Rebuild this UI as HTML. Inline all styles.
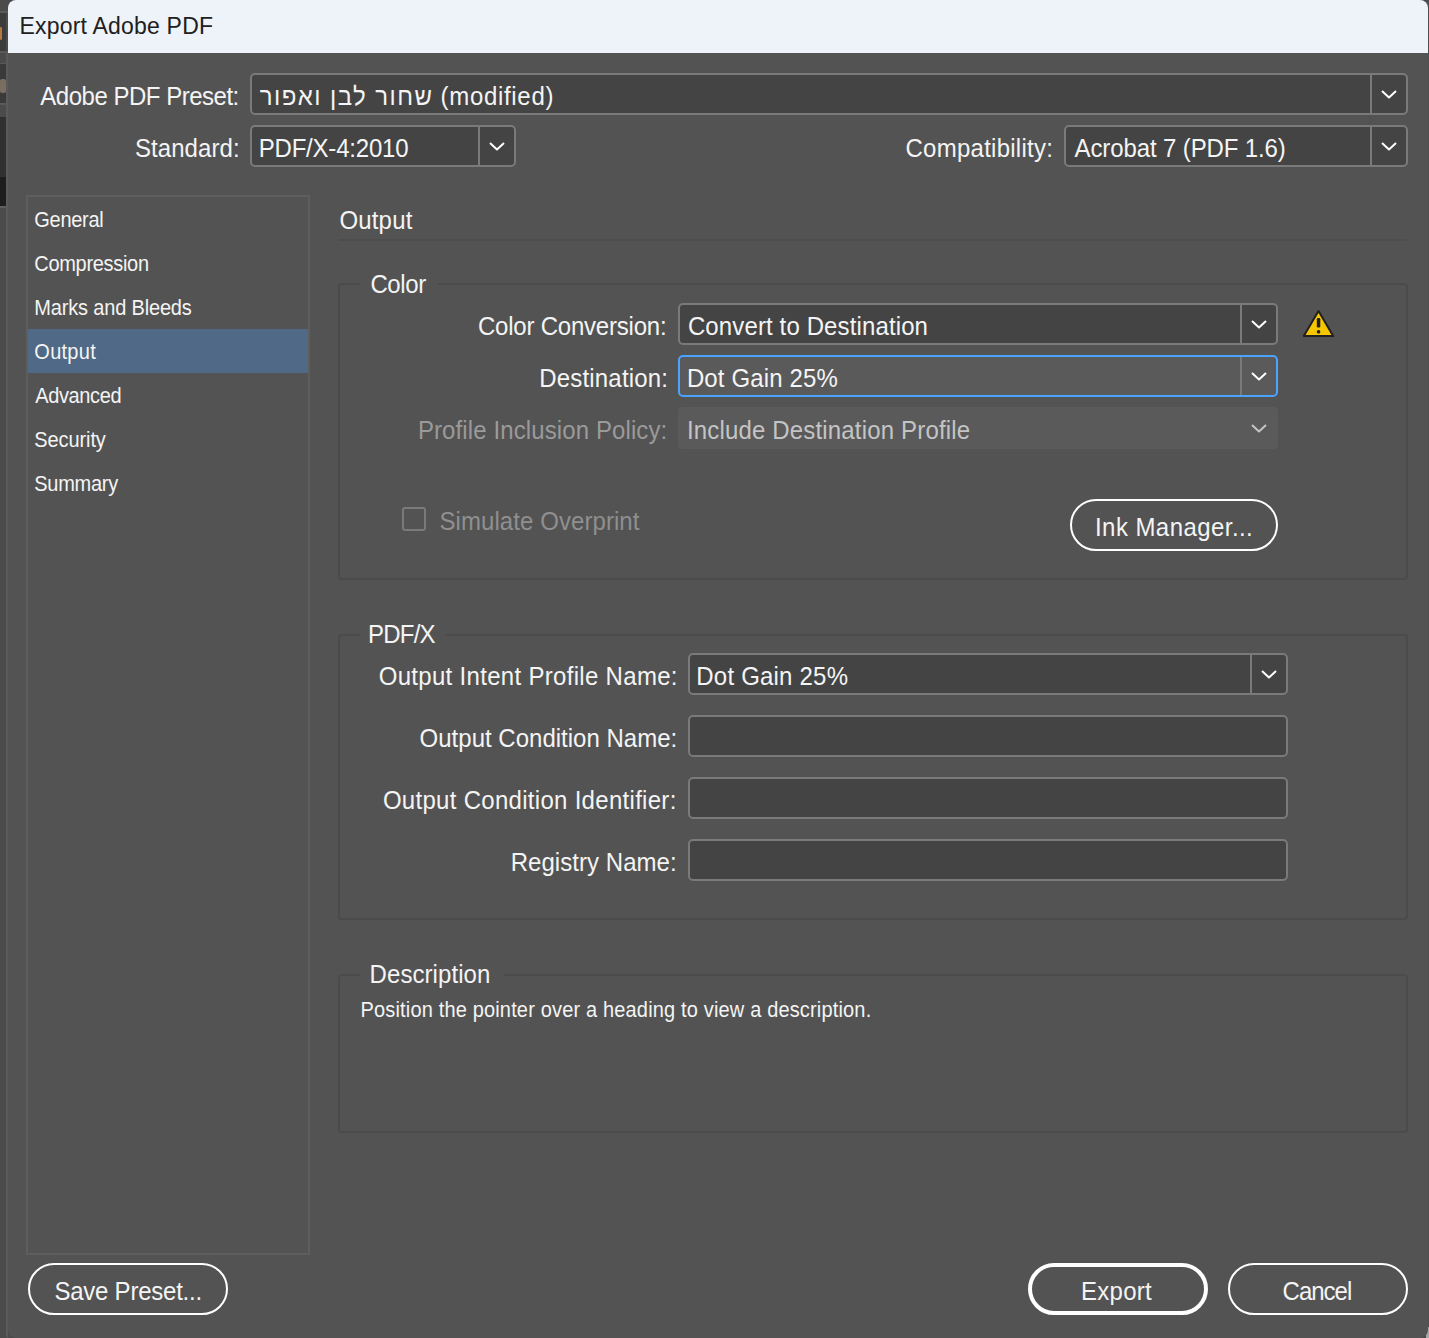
<!DOCTYPE html>
<html><head><meta charset="utf-8"><title>Export Adobe PDF</title><style>
html,body{margin:0;padding:0;width:1429px;height:1338px;overflow:hidden;background:#4a4a4a}
.b{position:absolute;box-sizing:border-box}
.t{position:absolute;font-family:"Liberation Sans",sans-serif;line-height:1;white-space:pre}
</style></head><body>
<div class="b" style="left:0px;top:0px;width:8px;height:1338px;background:#4b4b4b"></div>
<div class="b" style="left:0px;top:11px;width:8px;height:2px;background:#5a5a5a"></div>
<div class="b" style="left:0px;top:13px;width:6px;height:38px;background:#3c3c3c"></div>
<div class="b" style="left:0px;top:51px;width:8px;height:2px;background:#5a5a5a"></div>
<div class="b" style="left:0px;top:63px;width:8px;height:1px;background:#5a5a5a"></div>
<div class="b" style="left:0px;top:64px;width:6px;height:39px;background:#3a3a3a"></div>
<div class="b" style="left:0px;top:103px;width:8px;height:2px;background:#5a5a5a"></div>
<div class="b" style="left:0px;top:117px;width:6px;height:60px;background:#303030"></div>
<div class="b" style="left:0px;top:177px;width:6px;height:30px;background:#1e1e1e"></div>
<div class="b" style="left:0px;top:206px;width:8px;height:2px;background:#5e5e5e"></div>
<div class="b" style="left:0px;top:27px;width:2px;height:13px;background:#d08a40;border-radius:1px;opacity:.8"></div>
<div class="b" style="left:0px;top:79px;width:6px;height:14px;background:#c8b090;border-radius:2px;opacity:.45"></div>
<div class="b" style="left:6px;top:53px;width:2px;height:1285px;background:#5a5a5a;border-radius:0 0 0 8px"></div>
<div class="b" style="left:1427px;top:0px;width:2px;height:1338px;background:#4f4f4f"></div>
<div class="b" style="left:1426px;top:1327px;width:3px;height:11px;background:#a8a8a8;border-radius:3px 0 0 0"></div>
<div class="b" style="left:8px;top:0px;width:1420px;height:1338px;background:#535353;border-radius:8px 8px 8px 8px"></div>
<div class="b" style="left:8px;top:0px;width:1420px;height:53px;background:#eef2f9;border-radius:8px 8px 0 0"></div>
<div class="t" style="left:19.5px;top:14.5px;font-size:23px;letter-spacing:0.2px;color:#202020;transform-origin:0 19.0px;transform:scaleY(1.07);">Export Adobe PDF</div>
<div class="t" style="left:40.3px;top:85.0px;font-size:24px;letter-spacing:-0.488px;color:#f4f4f4;transform-origin:0 20.0px;transform:scaleY(1.07);">Adobe PDF Preset:</div>
<div class="b" style="left:250px;top:73px;width:1158px;height:42px;background:#444444;border:2px solid #7a7a7a;border-radius:5px"></div>
<div class="b" style="left:1370px;top:75px;width:2px;height:38px;background:#7a7a7a"></div>
<svg class="b" style="left:1380.0px;top:88.75px" width="18" height="10.5" viewBox="0 0 18 10.5"><polyline points="2,2 9.0,8.5 16,2" fill="none" stroke="#ffffff" stroke-width="2" stroke-linecap="butt" stroke-linejoin="round"/></svg>
<div class="t" style="left:259.7px;top:85.0px;font-size:24px;letter-spacing:1.446px;color:#f4f4f4;transform-origin:0 20.0px;transform:scaleY(1.07);">שחור לבן ואפור</div>
<div class="t" style="left:440.6px;top:85.0px;font-size:24px;letter-spacing:0.678px;color:#f4f4f4;transform-origin:0 20.0px;transform:scaleY(1.07);">(modified)</div>
<div class="t" style="left:135px;top:136.5px;font-size:24px;letter-spacing:0.062px;color:#f4f4f4;transform-origin:0 20.0px;transform:scaleY(1.07);">Standard:</div>
<div class="b" style="left:250px;top:125px;width:266px;height:42px;background:#444444;border:2px solid #7a7a7a;border-radius:5px"></div>
<div class="b" style="left:478px;top:127px;width:2px;height:38px;background:#7a7a7a"></div>
<svg class="b" style="left:488.0px;top:140.75px" width="18" height="10.5" viewBox="0 0 18 10.5"><polyline points="2,2 9.0,8.5 16,2" fill="none" stroke="#ffffff" stroke-width="2" stroke-linecap="butt" stroke-linejoin="round"/></svg>
<div class="t" style="left:258.7px;top:136.5px;font-size:24px;letter-spacing:-0.2px;color:#f4f4f4;transform-origin:0 20.0px;transform:scaleY(1.07);">PDF/X-4:2010</div>
<div class="t" style="left:905.5px;top:136.5px;font-size:24px;letter-spacing:0.254px;color:#f4f4f4;transform-origin:0 20.0px;transform:scaleY(1.07);">Compatibility:</div>
<div class="b" style="left:1064px;top:125px;width:344px;height:42px;background:#444444;border:2px solid #7a7a7a;border-radius:5px"></div>
<div class="b" style="left:1370px;top:127px;width:2px;height:38px;background:#7a7a7a"></div>
<svg class="b" style="left:1380.0px;top:140.75px" width="18" height="10.5" viewBox="0 0 18 10.5"><polyline points="2,2 9.0,8.5 16,2" fill="none" stroke="#ffffff" stroke-width="2" stroke-linecap="butt" stroke-linejoin="round"/></svg>
<div class="t" style="left:1074.6px;top:136.5px;font-size:24px;letter-spacing:-0.122px;color:#f4f4f4;transform-origin:0 20.0px;transform:scaleY(1.07);">Acrobat 7 (PDF 1.6)</div>
<div class="b" style="left:26px;top:195px;width:284px;height:1060px;border:2px solid #5e5e5e"></div>
<div class="b" style="left:28px;top:329px;width:280px;height:44px;background:#4f6986"></div>
<div class="t" style="left:34.3px;top:209.5px;font-size:20px;letter-spacing:-0.283px;color:#f4f4f4;transform-origin:0 17.0px;transform:scaleY(1.07);">General</div>
<div class="t" style="left:34.3px;top:253.5px;font-size:20px;letter-spacing:-0.31px;color:#f4f4f4;transform-origin:0 17.0px;transform:scaleY(1.07);">Compression</div>
<div class="t" style="left:34.3px;top:297.5px;font-size:20px;letter-spacing:-0.173px;color:#f4f4f4;transform-origin:0 17.0px;transform:scaleY(1.07);">Marks and Bleeds</div>
<div class="t" style="left:34.3px;top:341.5px;font-size:20px;letter-spacing:0.28px;color:#f4f4f4;transform-origin:0 17.0px;transform:scaleY(1.07);">Output</div>
<div class="t" style="left:35.3px;top:385.5px;font-size:20px;letter-spacing:-0.386px;color:#f4f4f4;transform-origin:0 17.0px;transform:scaleY(1.07);">Advanced</div>
<div class="t" style="left:34.3px;top:429.5px;font-size:20px;letter-spacing:-0.1px;color:#f4f4f4;transform-origin:0 17.0px;transform:scaleY(1.07);">Security</div>
<div class="t" style="left:34.3px;top:473.5px;font-size:20px;letter-spacing:-0.283px;color:#f4f4f4;transform-origin:0 17.0px;transform:scaleY(1.07);">Summary</div>
<div class="t" style="left:339.4px;top:208.5px;font-size:24px;letter-spacing:0.18px;color:#f4f4f4;transform-origin:0 20.0px;transform:scaleY(1.07);">Output</div>
<div class="b" style="left:338px;top:239px;width:1069px;height:2px;background:#4d4d4d"></div>
<div class="b" style="left:338px;top:283px;width:1070px;height:297px;border:2px solid #4b4b4b;border-radius:4px"></div>
<div class="b" style="left:360px;top:281px;width:78px;height:6px;background:#535353"></div>
<div class="t" style="left:370.4px;top:272.5px;font-size:24px;letter-spacing:-0.4px;color:#f4f4f4;transform-origin:0 20.0px;transform:scaleY(1.07);">Color</div>
<div class="t" style="left:477.9px;top:315.0px;font-size:24px;letter-spacing:-0.212px;color:#f4f4f4;transform-origin:0 20.0px;transform:scaleY(1.07);">Color Conversion:</div>
<div class="b" style="left:678px;top:303px;width:600px;height:42px;background:#444444;border:2px solid #7a7a7a;border-radius:5px"></div>
<div class="b" style="left:1240px;top:305px;width:2px;height:38px;background:#7a7a7a"></div>
<svg class="b" style="left:1250.0px;top:318.75px" width="18" height="10.5" viewBox="0 0 18 10.5"><polyline points="2,2 9.0,8.5 16,2" fill="none" stroke="#ffffff" stroke-width="2" stroke-linecap="butt" stroke-linejoin="round"/></svg>
<div class="t" style="left:687.9px;top:315.1px;font-size:24px;letter-spacing:0.124px;color:#f4f4f4;transform-origin:0 20.0px;transform:scaleY(1.07);">Convert to Destination</div>
<div class="t" style="left:539.2px;top:367.0px;font-size:24px;letter-spacing:0.191px;color:#f4f4f4;transform-origin:0 20.0px;transform:scaleY(1.07);">Destination:</div>
<div class="b" style="left:678px;top:355px;width:600px;height:42px;background:#5a5a5a;border:2px solid #4ba3ff;border-radius:5px"></div>
<div class="b" style="left:1240px;top:357px;width:2px;height:38px;background:#7a7a7a"></div>
<svg class="b" style="left:1250.0px;top:370.75px" width="18" height="10.5" viewBox="0 0 18 10.5"><polyline points="2,2 9.0,8.5 16,2" fill="none" stroke="#ffffff" stroke-width="2" stroke-linecap="butt" stroke-linejoin="round"/></svg>
<div class="t" style="left:686.9px;top:366.5px;font-size:24px;letter-spacing:0.145px;color:#f4f4f4;transform-origin:0 20.0px;transform:scaleY(1.07);">Dot Gain 25%</div>
<div class="t" style="left:417.9px;top:419.0px;font-size:24px;letter-spacing:0.108px;color:#9a9a9a;transform-origin:0 20.0px;transform:scaleY(1.07);">Profile Inclusion Policy:</div>
<div class="b" style="left:678px;top:407px;width:600px;height:42px;background:#5a5a5a;border-radius:4px"></div>
<div class="t" style="left:686.9px;top:418.7px;font-size:24px;letter-spacing:0.169px;color:#c4c4c4;transform-origin:0 20.0px;transform:scaleY(1.07);">Include Destination Profile</div>
<svg class="b" style="left:1250.0px;top:422.75px" width="18" height="10.5" viewBox="0 0 18 10.5"><polyline points="2,2 9.0,8.5 16,2" fill="none" stroke="#c4c4c4" stroke-width="2" stroke-linecap="butt" stroke-linejoin="round"/></svg>
<svg class="b" style="left:1301px;top:308px" width="36" height="32" viewBox="0 0 36 32"><path d="M17.5 3 L32.2 28.1 L2.8 28.1 Z" fill="#f6c600" stroke="#202020" stroke-width="2" stroke-linejoin="round"/><rect x="15.8" y="10" width="3.5" height="9.4" fill="#202020" rx="1.2"/><rect x="15.8" y="22" width="3.5" height="3.5" fill="#202020" rx="1.5"/></svg>
<div class="b" style="left:402px;top:507px;width:24px;height:24px;border:2px solid #7a7a7a;border-radius:3px"></div>
<div class="t" style="left:439.5px;top:509.9px;font-size:24px;letter-spacing:0.071px;color:#8f8f8f;transform-origin:0 20.0px;transform:scaleY(1.07);">Simulate Overprint</div>
<div class="b" style="left:1070px;top:499px;width:208px;height:52px;border:2px solid #ffffff;border-radius:26px"></div>
<div class="t" style="left:1095px;top:516.4px;font-size:24px;letter-spacing:0.438px;color:#f4f4f4;transform-origin:0 20.0px;transform:scaleY(1.07);">Ink Manager...</div>
<div class="b" style="left:338px;top:634px;width:1070px;height:286px;border:2px solid #4b4b4b;border-radius:4px"></div>
<div class="b" style="left:360px;top:632px;width:86px;height:6px;background:#535353"></div>
<div class="t" style="left:368.1px;top:622.9px;font-size:24px;letter-spacing:-0.8px;color:#f4f4f4;transform-origin:0 20.0px;transform:scaleY(1.07);">PDF/X</div>
<div class="t" style="left:378.7px;top:664.8px;font-size:24px;letter-spacing:0.308px;color:#f4f4f4;transform-origin:0 20.0px;transform:scaleY(1.07);">Output Intent Profile Name:</div>
<div class="b" style="left:688px;top:653px;width:600px;height:42px;background:#444444;border:2px solid #7a7a7a;border-radius:5px"></div>
<div class="b" style="left:1250px;top:655px;width:2px;height:38px;background:#7a7a7a"></div>
<svg class="b" style="left:1260.0px;top:668.75px" width="18" height="10.5" viewBox="0 0 18 10.5"><polyline points="2,2 9.0,8.5 16,2" fill="none" stroke="#ffffff" stroke-width="2" stroke-linecap="butt" stroke-linejoin="round"/></svg>
<div class="t" style="left:696.3px;top:664.9px;font-size:24px;letter-spacing:0.209px;color:#f4f4f4;transform-origin:0 20.0px;transform:scaleY(1.07);">Dot Gain 25%</div>
<div class="t" style="left:419.6px;top:726.5px;font-size:24px;letter-spacing:0.005px;color:#f4f4f4;transform-origin:0 20.0px;transform:scaleY(1.07);">Output Condition Name:</div>
<div class="b" style="left:688px;top:715px;width:600px;height:42px;background:#444444;border:2px solid #7a7a7a;border-radius:5px"></div>
<div class="t" style="left:382.9px;top:789.0px;font-size:24px;letter-spacing:0.293px;color:#f4f4f4;transform-origin:0 20.0px;transform:scaleY(1.07);">Output Condition Identifier:</div>
<div class="b" style="left:688px;top:777px;width:600px;height:42px;background:#444444;border:2px solid #7a7a7a;border-radius:5px"></div>
<div class="t" style="left:510.7px;top:850.9px;font-size:24px;letter-spacing:0.046px;color:#f4f4f4;transform-origin:0 20.0px;transform:scaleY(1.07);">Registry Name:</div>
<div class="b" style="left:688px;top:839px;width:600px;height:42px;background:#444444;border:2px solid #7a7a7a;border-radius:5px"></div>
<div class="b" style="left:338px;top:974px;width:1070px;height:159px;border:2px solid #4b4b4b;border-radius:4px"></div>
<div class="b" style="left:360px;top:972px;width:144px;height:6px;background:#535353"></div>
<div class="t" style="left:369.6px;top:963.0px;font-size:24px;letter-spacing:0.07px;color:#f4f4f4;transform-origin:0 20.0px;transform:scaleY(1.07);">Description</div>
<div class="t" style="left:360.5px;top:999.5px;font-size:20px;letter-spacing:0.163px;color:#f4f4f4;transform-origin:0 17.0px;transform:scaleY(1.07);">Position the pointer over a heading to view a description.</div>
<div class="b" style="left:28px;top:1263px;width:200px;height:52px;border:2px solid #ffffff;border-radius:26px"></div>
<div class="t" style="left:54.4px;top:1279.8px;font-size:24px;letter-spacing:-0.231px;color:#f4f4f4;transform-origin:0 20.0px;transform:scaleY(1.07);">Save Preset...</div>
<div class="b" style="left:1028px;top:1263px;width:180px;height:52px;border:4px solid #ffffff;border-radius:26px"></div>
<div class="t" style="left:1081px;top:1280.2px;font-size:24px;letter-spacing:0.26px;color:#f4f4f4;transform-origin:0 20.0px;transform:scaleY(1.07);">Export</div>
<div class="b" style="left:1228px;top:1263px;width:180px;height:52px;border:2px solid #ffffff;border-radius:26px"></div>
<div class="t" style="left:1282.6px;top:1280.2px;font-size:24px;letter-spacing:-1.0px;color:#f4f4f4;transform-origin:0 20.0px;transform:scaleY(1.07);">Cancel</div>
</body></html>
